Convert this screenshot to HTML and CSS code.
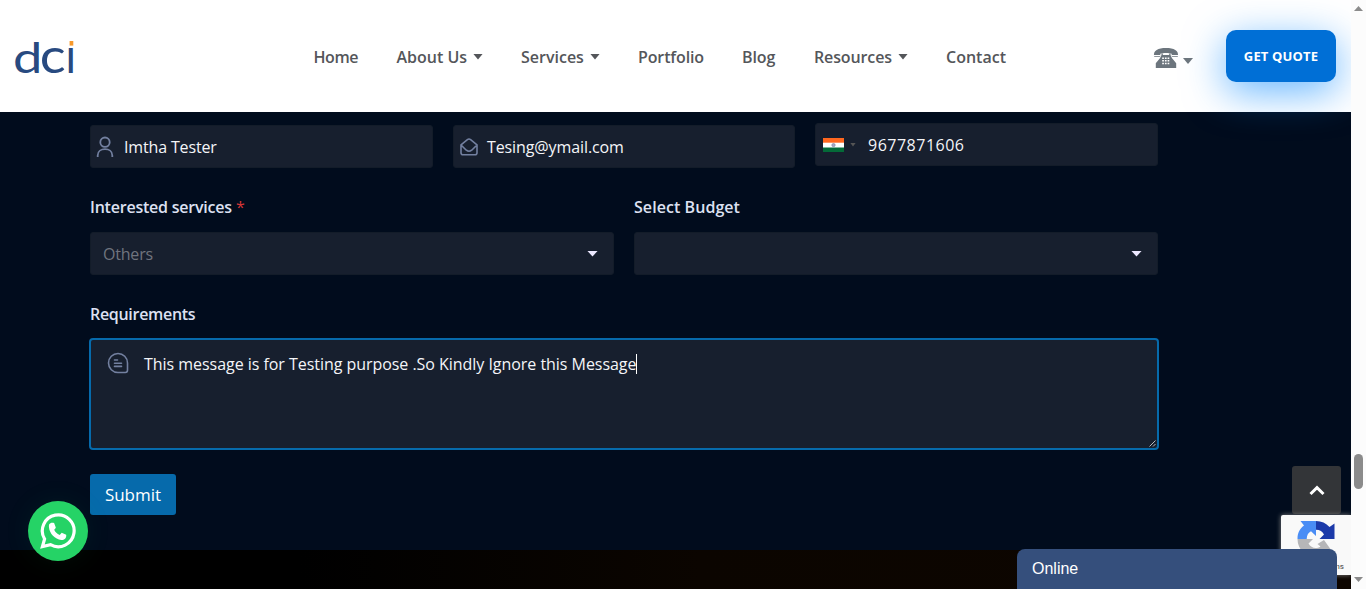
FILE: index.html
```html
<!DOCTYPE html>
<html lang="en">
<head>
<meta charset="utf-8">
<title>dci</title>
<link rel="stylesheet" href="styles.css">
</head>
<body>
<div class="page">
  <header class="header">
    <svg class="logo" width="64" height="40" viewBox="0 0 64 40" role="img">
      <text class="logo-text" transform="translate(-2 34.500) scale(1.140 .93)">d</text>
      <text class="logo-text" transform="translate(24.800 34.500) scale(1.180 1.040)">c</text>
      <text class="logo-text" transform="translate(50.500 34.500) scale(.95 1.040)">ı</text>
      <rect x="54.600" y="3" width="3.700" height="4.600" fill="#f7992b"/>
    </svg>
    <nav class="nav">
      <a class="w-home">Home</a>
      <a class="w-about">About Us<i class="caret"></i></a>
      <a class="w-services">Services<i class="caret"></i></a>
      <a class="w-portfolio">Portfolio</a>
      <a class="w-blog">Blog</a>
      <a class="w-resources">Resources<i class="caret"></i></a>
      <a class="w-contact">Contact</a>
    </nav>
    <div class="phone">
      <svg width="26" height="22" viewBox="0 0 26 22">
        <path fill="#6c757d" d="M1 8.800C.3 3.500 5 1 13 1s12.700 2.500 12 7.800c0 .7-.3 1-1 1h-4.300c-.6 0-1-.3-1-1V6.700C16 5.800 10 5.800 7.300 6.700v2.100c0 .7-.4 1-1 1H2c-.7 0-1-.3-1-1Z"/>
        <path fill="#fff" d="M1 8h6.500v1H1zM18.500 8H25v1h-6.500z"/>
        <path fill="#6c757d" d="M8.500 6.500h1.300v1.600h6.400V6.500h1.300v1.600l1.400 2.900 4.300 5.200V21H2.800v-4.800L7.100 11l1.400-2.900Z"/>
        <path stroke="#fff" stroke-width="1.500" stroke-dasharray="1.700 1" d="M9.200 11.200h7.400M9.200 13.800h7.400M9.200 16.400h7.400"/>
      </svg>
      <i class="caret"></i>
    </div>
    <a class="quote">GET QUOTE</a>
  </header>

  <main class="form">
    <div class="row three">
      <div class="field">
        <svg class="ico-user" width="18" height="22" viewBox="0 0 18 22" fill="none" stroke="#7380a0" stroke-width="1.800"><circle cx="9" cy="6.200" r="4.700"/><path d="M1.700 21v-1.500c0-8.400 14.600-8.400 14.600 0V21"/></svg>
        <span class="t-name">Imtha Tester</span>
      </div>
      <div class="field">
        <svg class="ico-mail" width="18" height="18" viewBox="0 0 18 18" fill="none" stroke="#7380a0" stroke-width="1.600" stroke-linejoin="round"><path d="M1 6.800 7.400 1.600q1.600-1.200 3.200 0L17 6.800v8q0 2-2 2H3q-2 0-2-2ZM1.300 7.200l5 5q2.700 2 5.400 0l5-5"/></svg>
        <span class="t-mail">Tesing@ymail.com</span>
      </div>
      <div class="field phone-field">
        <svg class="flag" width="21" height="14" viewBox="0 0 20 14" preserveAspectRatio="none"><path fill="#ff671f" d="M0 0h20v5H0z"/><path fill="#fff" d="M0 4.700h20V10H0z"/><path fill="#046a38" d="M0 9.500h20V14H0z"/><circle cx="10" cy="7.100" r="1.600" fill="#a6a9c2" stroke="#8586aa" stroke-width=".7"/></svg>
        <i class="mini-caret"></i>
        <span class="t-phone">9677871606</span>
      </div>
    </div>

    <div class="row two">
      <div>
        <div class="label"><span class="l-services">Interested services</span> <b class="star">*</b></div>
        <div class="select"><span class="t-others">Others</span><i class="drop"></i></div>
      </div>
      <div>
        <div class="label"><span class="l-budget">Select Budget</span></div>
        <div class="select"><i class="drop"></i></div>
      </div>
    </div>

    <div class="label requirements"><span class="l-req">Requirements</span></div>
    <div class="area">
      <svg width="22" height="22" viewBox="0 0 22 22" fill="none" stroke="#7380a0" stroke-width="1.600" stroke-linecap="round"><path d="M11 1.500a9.500 9.500 0 0 0 0 19h7.300q2.200 0 2.200-2.200V11A9.500 9.500 0 0 0 11 1.500ZM7.500 8h3M7.500 11.200h7M7.500 14.400h7"/></svg>
      <span class="t-msg">This message is for Testing purpose .So Kindly Ignore this Message</span><i class="cursor"></i>
      <svg class="grip" width="7" height="7" viewBox="0 0 7 7"><path d="M.5 6.500l6-6M4 6.500 6.500 4" stroke="#c8cbd0" stroke-width=".9"/></svg>
    </div>
    <button class="submit">Submit</button>
  </main>
  <div class="strip"></div>
</div>

<aside class="scrollbar"><i class="up"></i><i class="thumb"></i><i class="down"></i></aside>

<div class="whatsapp">
  <svg width="36" height="36" viewBox="0 0 36 36">
    <path d="M2.400 33.600 4.600 26A15.900 15.900 0 1 1 10.500 31.700Z" fill="none" stroke="#fff" stroke-width="3.200"/>
    <path fill="#fff" d="M9.200 11.300c1-1.700 3.100-2 4.900-1.200l1.700 4.500c-.3 1-1 1.500-1.600 2.200 1.100 2.400 2.800 4 5.500 5.100l2-2.100 4.500 2c.5 3.800-2.200 5.400-5 5.200-6.200-.6-11.700-6.600-12.200-12.500-.1-1.400-.1-2.300.2-3.200Z"/>
  </svg>
</div>
<div class="top-btn"><svg width="16" height="11" viewBox="0 0 16 11"><path d="M1.500 9 8 2.700 14.500 9" fill="none" stroke="#fff" stroke-width="3"/></svg></div>
<div class="captcha">
  <svg width="38" height="38" viewBox="0 0 38 38">
    <path fill="#1c3aa9" d="M19 1c5.500 0 10 2 13.500 6L37.500 3.500V19H22.500l4.500-4.500C25.500 11.500 23 9.800 19 9.700Z"/>
    <path fill="#4a8df5" d="M19 1v15l-5-4.700C11.500 12.500 9.800 15 9.700 19H.5C.5 13 2.500 9 7 5.500L3.500 1Z"/>
    <path fill="#b6b6b8" d="M.5 19H16l-4.500 4.500c2.500 4.500 7.500 6 12 3l-3-2.500 6.500-4 10 14-4-2C23 42 .5 37 .5 19Z"/>
  </svg>
  <span class="terms">Privacy - Terms</span>
</div>
<div class="chat">Online</div>
</body>
</html>
```
FILE: styles.css
```css
* { box-sizing: border-box; }
body { margin: 0; height: 589px; overflow: hidden; display: flex; background: #010c1d; font-family: "Open Sans", "Noto Sans", sans-serif; }
.page { width: 1351px; height: 589px; display: flex; flex-direction: column; overflow: hidden; }
.header { height: 112px; flex: none; background: #fff; display: flex; align-items: flex-start; padding: 0 15px; position: relative; }
.logo { flex: none; margin-top: 38px; overflow: visible; }
.logo-text { font-family: Lato, sans-serif; font-size: 46px; fill: #284a80; }
.nav { display: flex; gap: 38px; margin: 46px 0 0 234.5px; color: #54565a; font-size: 16px; font-weight: 600; line-height: 23px; letter-spacing: -.12px; white-space: nowrap; }
.nav a { display: flex; justify-content: space-between; align-items: center; flex: none; }
.caret { width: 10px; height: 6px; background: currentColor; clip-path: polygon(0 0, 100% 0, 50% 100%); margin-bottom: 2px; }
.w-home { width: 45px; letter-spacing: -.4px; }
.w-about { width: 86.5px; letter-spacing: 0; }
.w-services { width: 79px; letter-spacing: 0; }
.w-portfolio { width: 66px; }
.w-blog { width: 34px; }
.w-resources { width: 94px; }
.w-contact { width: 60px; letter-spacing: 0; }
.phone { width: 40px; margin: 47px 0 0 147px; display: flex; justify-content: space-between; align-items: flex-start; color: #6c757d; }
.phone .caret { margin-top: 11px; }
.quote { width: 110px; height: 52px; margin: 30px 0 0 33px; border-radius: 10px; background: #006fd6; color: #fff; font-size: 13px; font-weight: 700; line-height: 52px; letter-spacing: .15px; text-align: center; box-shadow: 0 10px 40px rgba(0, 133, 255, .6); white-space: nowrap; }
.form { height: 438px; flex: none; padding: 11px 0 0 90px; width: 1158px; }
.row { display: grid; }
.three { grid-template-columns: 343px 342px 343px; gap: 20px; height: 45px; align-items: end; }
.field { height: 43px; background: #171f2e; border: 1px solid #131c29; border-radius: 3px; display: flex; align-items: center; color: #f4f5f8; font-size: 16px; line-height: 22px; white-space: nowrap; }
.field span { padding-top: 1px; }
.phone-field { align-self: start; }
.ico-user { margin-left: 4.5px; }
.t-name { margin-left: 10.5px; letter-spacing: -.15px; }
.ico-mail { margin-left: 6px; }
.t-mail { margin-left: 9px; letter-spacing: -.1px; }
.flag { margin-left: 7px; }
.mini-caret { width: 6px; height: 4px; margin-left: 6px; background: #555; clip-path: polygon(0 0, 100% 0, 50% 100%); }
.t-phone { margin-left: 12px; letter-spacing: .5px; }
.two { grid-template-columns: 524px 524px; gap: 20px; margin-top: 28px; }
.label { color: #dde1f2; font-size: 16px; font-weight: 600; line-height: 23px; height: 22px; white-space: nowrap; }
.l-services { letter-spacing: -.22px; }
.l-budget { letter-spacing: .06px; }
.l-req { letter-spacing: -.3px; }
.star { color: #d63637; font-weight: 400; }
.select { height: 43px; margin-top: 14px; padding: 0 15px 0 12px; background: #171f2e; border: 1px solid #131c29; border-radius: 3px; display: flex; align-items: center; color: #70747e; font-size: 16px; }
.t-others { letter-spacing: -.2px; padding-top: 1px; }
.drop { width: 11px; height: 6px; margin-left: auto; background: #ece8ff; clip-path: polygon(0 0, 100% 0, 50% 100%); }
.requirements { margin-top: 28px; }
.area { position: relative; width: 1070px; height: 112px; margin: 13px 0 0 -1px; padding: 12px 16px; background: #171f2e; border: 2px solid #066aab; border-radius: 4px; display: flex; color: #f4f5f8; font-size: 16px; line-height: 25px; white-space: nowrap; }
.t-msg { margin-left: 15px; width: 492px; letter-spacing: -.04px; }
.cursor { width: 1px; height: 20px; background: #fff; margin-top: 2px; }
.grip { position: absolute; right: 1px; bottom: 1px; }
.submit { display: block; width: 86px; height: 41px; margin-top: 24px; padding: 0; border: 0; border-radius: 3px; background: #066aab; color: #fff; font: 500 17px/41px "Open Sans", sans-serif; }
.strip { height: 39px; flex: none; background: linear-gradient(90deg, #000 0, #000 300px, #0b0500 700px, #0e0600 100%); }
.scrollbar { width: 15px; height: 589px; background: #fcfcfc; position: relative; z-index: 2; }
.up, .down, .thumb { position: absolute; left: 3px; width: 9px; height: 5px; background: #8b8b8b; }
.up { top: 6px; clip-path: polygon(50% 0, 100% 100%, 0 100%); }
.down { top: 577px; clip-path: polygon(0 0, 100% 0, 50% 100%); }
.thumb { top: 454px; height: 35px; border-radius: 5px; }
.whatsapp { position: absolute; left: 28px; top: 501px; width: 60px; height: 60px; border-radius: 50%; background: #25d366; padding: 12px; box-shadow: 0 0 30px rgba(37, 211, 102, .07); }
.whatsapp svg { display: block; }
.top-btn { position: absolute; left: 1292px; top: 466px; width: 49px; height: 48px; border-radius: 3px; background: #333538; display: flex; justify-content: center; align-items: center; }
.captcha { position: absolute; left: 1281px; top: 515px; width: 70px; height: 60px; border-radius: 2px 0 0 2px; background: #f9f9f9; box-shadow: 0 0 5px gray; }
.captcha svg { margin: 5px 0 0 16px; display: block; }
.terms { position: absolute; right: 7px; bottom: 3px; font: 8px/10px Roboto, sans-serif; color: #444; white-space: nowrap; }
.chat { position: absolute; left: 1017px; top: 549px; width: 320px; height: 40px; padding-left: 15px; border-radius: 8px 8px 0 0; background: #354f7c; color: #fff; font: 16px/39px "Liberation Sans", sans-serif; }
```
